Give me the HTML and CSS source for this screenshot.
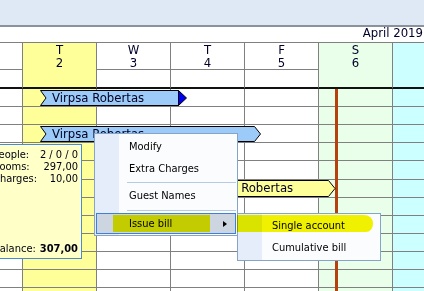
FILE: index.html
```html
<!DOCTYPE html>
<html>
<head>
<meta charset="utf-8">
<link rel="stylesheet" href="styles.css">
</head>
<body>
<div class="app">
  <div class="topband"></div>
  <div class="month">April 2019</div>
  <div class="grid">
    <div class="row head"><div></div><div>T<br>2</div><div>W<br>3</div><div>T<br>4</div><div>F<br>5</div><div>S<br>6</div><div></div></div>
    <div class="row sub"><div></div><div></div><div></div><div></div><div></div><div></div><div></div></div>
    <div class="row"><div></div><div></div><div></div><div></div><div></div><div></div><div></div></div>
    <div class="row"><div></div><div></div><div></div><div></div><div></div><div></div><div></div></div>
    <div class="row"><div></div><div></div><div></div><div></div><div></div><div></div><div></div></div>
    <div class="row"><div></div><div></div><div></div><div></div><div></div><div></div><div></div></div>
    <div class="row tall"><div></div><div></div><div></div><div></div><div></div><div></div><div></div></div>
    <div class="row"><div></div><div></div><div></div><div></div><div></div><div></div><div></div></div>
    <div class="row"><div></div><div></div><div></div><div></div><div></div><div></div><div></div></div>
    <div class="row"><div></div><div></div><div></div><div></div><div></div><div></div><div></div></div>
    <div class="row"><div></div><div></div><div></div><div></div><div></div><div></div><div></div></div>
    <div class="row"><div></div><div></div><div></div><div></div><div></div><div></div><div></div></div>
    <div class="row"><div></div><div></div><div></div><div></div><div></div><div></div><div></div></div>
    <div class="row"><div></div><div></div><div></div><div></div><div></div><div></div><div></div></div>
  </div>

  <div class="nowline"></div>

  <div class="bar bar1">
    <svg width="147" height="16" viewBox="0 0 147 16"><polygon points="0.5,0.5 138.5,0.5 138.5,15.5 0.5,15.5 6,8" fill="#9ccaf9" stroke="#000" stroke-width="1"/><polygon points="138.5,0.5 146.5,8 138.5,15.5" fill="#0000f0" stroke="#000" stroke-width="1"/></svg>
    <span>Virpsa Robertas</span>
  </div>

  <div class="bar bar2">
    <svg width="221" height="16" viewBox="0 0 221 16"><polygon points="0.5,0.5 214.5,0.5 220.5,8 214.5,15.5 0.5,15.5 6,8" fill="#9ccaf9" stroke="#000" stroke-width="1"/></svg>
    <span>Virpsa Robertas</span>
  </div>

  <div class="bar bar3">
    <svg width="147" height="17" viewBox="0 0 147 17"><polygon points="0.5,0.5 139.5,0.5 146,8.5 139.5,16.5 0.5,16.5 6,8.5" fill="#ffff99" stroke="#000" stroke-width="1"/></svg>
    <span>Virpsa Robertas</span>
  </div>

  <div class="tip">
    <div class="tiprow"><span>People:</span><span class="val">2 / 0 / 0</span></div>
    <div class="tiprow"><span>Rooms:</span><span class="val">297,00</span></div>
    <div class="tiprow"><span>Charges:</span><span class="val">10,00</span></div>
    <div class="tiprow total"><span>Balance:</span><span class="val strong">307,00</span></div>
  </div>

  <div class="menu">
    <div class="mi">Modify</div>
    <div class="mi">Extra Charges</div>
    <div class="sep"></div>
    <div class="mi">Guest Names</div>
    <div class="sep sep2"></div>
    <div class="mi hot">Issue bill<span class="arrow"></span></div>
  </div>

  <div class="menu submenu">
    <div class="mi">Single account</div>
    <div class="mi">Cumulative bill</div>
  </div>

  <div class="mark markA"></div>
  <div class="mark markB"></div>
</div>
</body>
</html>
```

FILE: styles.css
```css
* {
  box-sizing: border-box;
  margin: 0;
  padding: 0;
}

body {
  margin: 0;
  background: #ffffff;
  font-family: "DejaVu Sans Condensed", "DejaVu Sans", sans-serif;
  font-stretch: condensed;
  color: #000;
}

.app {
  position: relative;
  width: 424px;
  height: 291px;
  overflow: hidden;
}

.topband {
  height: 27px;
  background: #dee9f5;
  border-bottom: 2px solid #8a929c;
}

.month {
  height: 16px;
  border-bottom: 1px solid #808080;
  text-align: right;
  font-size: 13px;
  line-height: 12px;
  padding-right: 1px;
  color: #00002a;
}

.row {
  display: grid;
  grid-template-columns: 23px 74px 74px 74px 74px 74px 1fr;
  height: 18px;
}

.row.tall {
  height: 19px;
}

.row > div {
  border-right: 1px solid #808080;
  border-bottom: 1px solid #808080;
}

.row > div:nth-child(2) {
  background: #ffff99;
}

.row > div:nth-child(6) {
  background: #eaffea;
}

.row > div:nth-child(7) {
  background: #ccffff;
  border-right: none;
}

.row.head {
  height: 26px;
}

.row.head > div {
  text-align: center;
  font-size: 13px;
  line-height: 13px;
  color: #00002a;
}

.row.sub {
  height: 20px;
}

.row.sub > div {
  border-bottom: 2px solid #111111;
}

.nowline {
  position: absolute;
  left: 335px;
  top: 89px;
  width: 3px;
  height: 210px;
  background: #b5420c;
}

.bar {
  position: absolute;
  height: 16px;
  font-size: 13px;
  line-height: 16px;
  padding-left: 12px;
  white-space: nowrap;
  color: #000020;
}

.bar svg {
  position: absolute;
  left: 0;
  top: 0;
}

.bar span {
  position: relative;
}

.bar1 {
  left: 40px;
  top: 90px;
  width: 147px;
}

.bar2 {
  left: 40px;
  top: 126px;
  width: 221px;
}

.bar3 {
  left: 189px;
  top: 180px;
  width: 147px;
  height: 17px;
}

.tip {
  position: absolute;
  left: -10px;
  top: 144px;
  width: 92px;
  height: 115px;
  border: 1px solid #4a89d6;
  background: #ffffc8;
  padding: 4px 3px 0 2px;
  font-size: 11px;
  line-height: 12px;
  color: #000010;
}

.tiprow {
  display: grid;
  grid-template-columns: auto 1fr;
}

.tiprow .val {
  text-align: right;
}

.tiprow.total {
  margin-top: 58px;
}

.strong {
  font-weight: bold;
}

.menu {
  position: absolute;
  left: 94px;
  top: 133px;
  width: 144px;
  height: 103px;
  border: 1px solid #86a3c9;
  background: linear-gradient(to right, #e4edf9 0, #e4edf9 24px, #fbfcfe 24px);
  padding: 2px 1px 1px 1px;
  font-size: 11px;
  color: #000;
}

.mi {
  position: relative;
  height: 22px;
  line-height: 22px;
  padding-left: 33px;
  white-space: nowrap;
}

.sep {
  height: 5px;
  margin-left: 31px;
  background: linear-gradient(#b7c9e3, #b7c9e3) 0 2px / 100% 1px no-repeat;
}

.sep2 {
  height: 6px;
  background-position: 0 3px;
}

.mi.hot {
  height: 21px;
  line-height: 19px;
  padding-left: 32px;
  border: 1px solid #3f7fd6;
  background: #ccd5e0;
}

.arrow {
  position: absolute;
  left: 126px;
  top: 7px;
  width: 0;
  height: 0;
  border-left: 4px solid #000;
  border-top: 3.5px solid transparent;
  border-bottom: 3.5px solid transparent;
}

.submenu {
  left: 237px;
  top: 213px;
  width: 144px;
  height: 48px;
  padding: 1px;
}

.mark {
  position: absolute;
  mix-blend-mode: multiply;
  background: #f4f400;
}

.markA {
  left: 113px;
  top: 215px;
  width: 97px;
  height: 17px;
}

.markB {
  left: 237px;
  top: 215px;
  width: 136px;
  height: 17px;
  border-radius: 0 9px 7px 0 / 0 8px 8px 0;
}
```
